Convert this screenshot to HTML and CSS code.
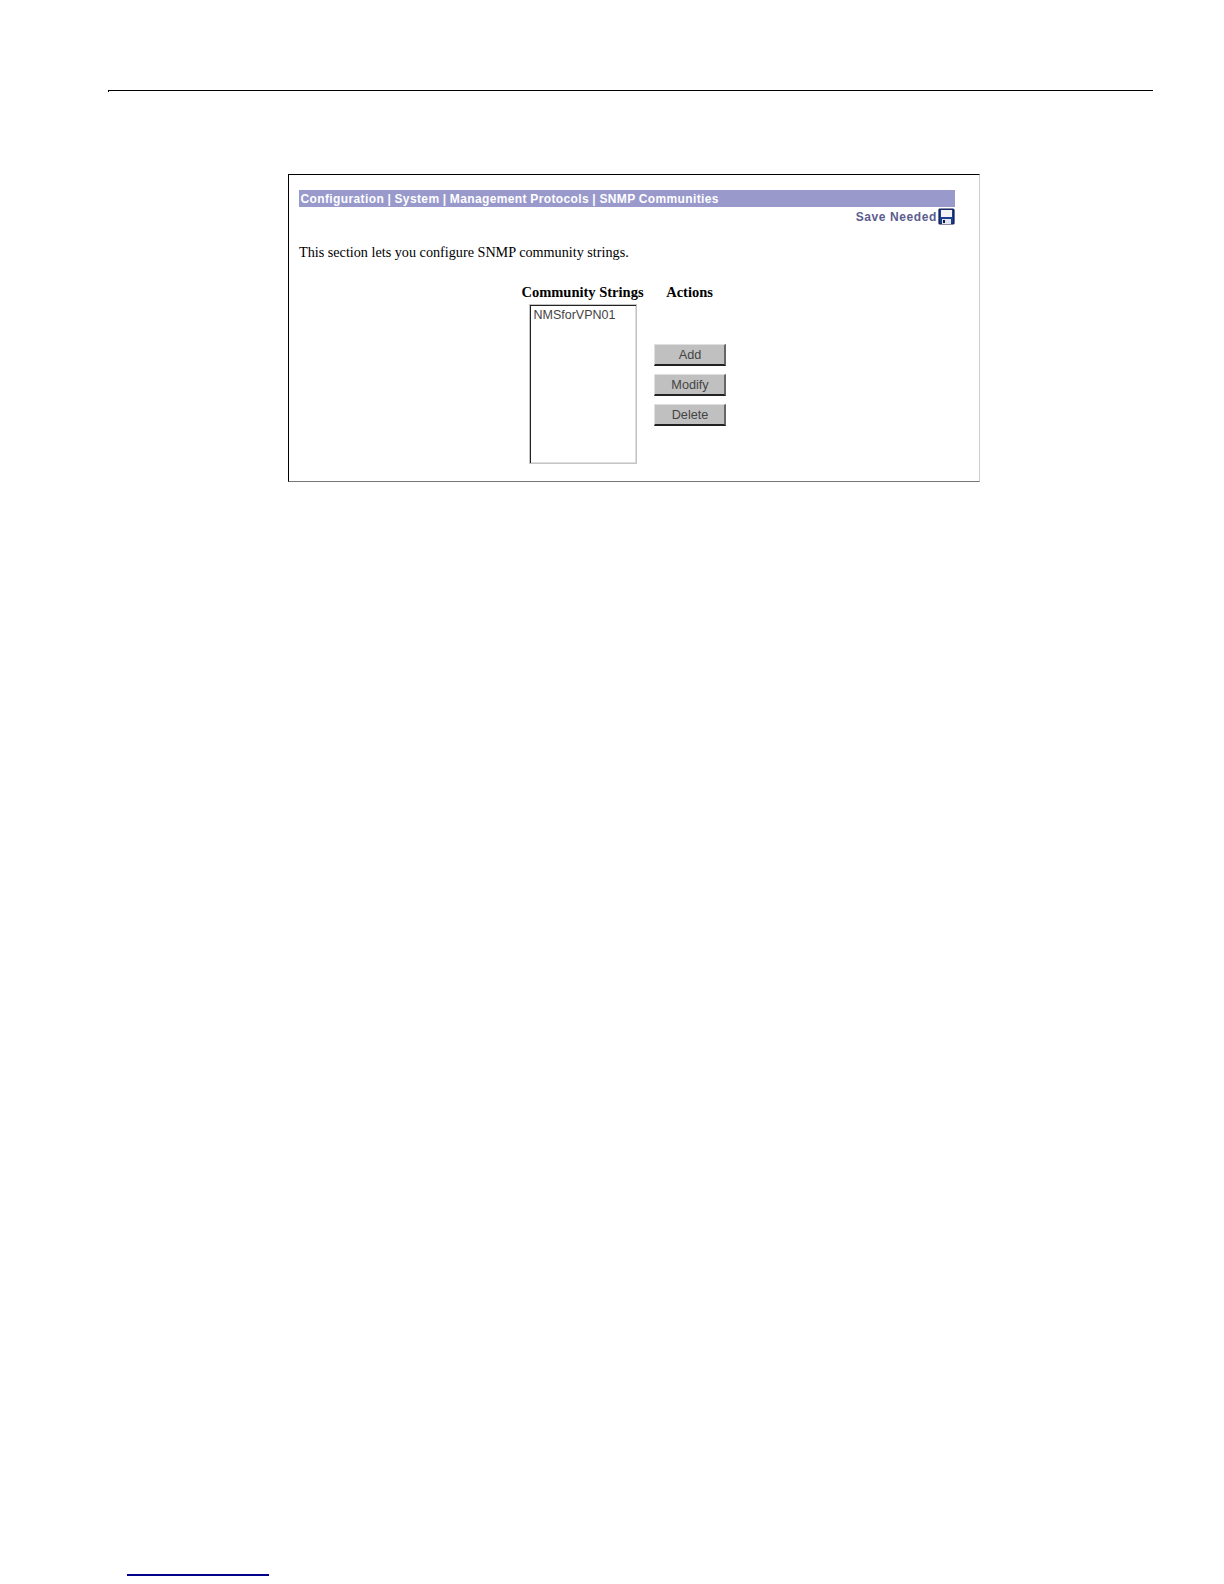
FILE: index.html
```html
<!DOCTYPE html>
<html lang="en">
<head>
    <meta charset="UTF-8">
    <title>SNMP Communities</title>
    <link rel="stylesheet" href="styles.css">
</head>
<body>
    <div class="page-rule"></div>

    <div class="panel">
        <div class="title-bar">Configuration | System | Management Protocols | SNMP Communities</div>
        <div class="save-row">
            <span class="save-text">Save Needed</span>
            <svg class="save-icon" width="17" height="17" viewBox="0 0 17 17">
                <path d="M1 2 Q1 1 2 1 H15 Q16 1 16 2 V15 Q16 16 15 16 H2 Q1 16 1 15 Z" fill="#1c3f94" stroke="#10184a" stroke-width="1.2"/>
                <rect x="3" y="2" width="11" height="7" fill="#f4f4f8"/>
                <rect x="4" y="11" width="9" height="5" fill="#e4e6ee"/>
                <rect x="5" y="12" width="2" height="3" fill="#10184a"/>
            </svg>
        </div>
        <p class="intro">This section lets you configure SNMP community strings.</p>

        <div class="form-area">
            <div class="list-col">
                <div class="col-head">Community Strings</div>
                <select class="string-list" size="10">
                    <option>NMSforVPN01</option>
                </select>
            </div>
            <div class="action-col">
                <div class="col-head">Actions</div>
                <div class="buttons">
                    <button>Add</button>
                    <button>Modify</button>
                    <button>Delete</button>
                </div>
            </div>
        </div>
    </div>

    <div class="footnote-rule"></div>
</body>
</html>
```

FILE: styles.css
```css
html, body {
    margin: 0;
    padding: 0;
    background: #fff;
}
body {
    height: 1584px;
    overflow: hidden;
    font-family: "Liberation Serif", serif;
    color: #000;
}
.page-rule {
    position: relative;
    height: 1px;
    margin: 90px 71px 0 108px;
    background: #000;
}
.page-rule::before {
    content: "";
    position: absolute;
    left: 0;
    top: 1px;
    width: 1px;
    height: 1px;
    background: #000;
}
.panel {
    box-sizing: border-box;
    width: 692px;
    height: 308px;
    margin: 83px 0 0 288px;
    padding: 15px 24px 0 10px;
    border-top: 1px solid #000;
    border-left: 1px solid #000;
    border-right: 1px solid #ccc;
    border-bottom: 1px solid #777;
}
.title-bar {
    height: 17px;
    padding-left: 1.5px;
    background: #9999cc;
    color: #fff;
    font: bold 12px/18px "Liberation Sans", sans-serif;
    letter-spacing: 0.38px;
    word-spacing: -0.4px;
    white-space: nowrap;
}
.save-row {
    display: flex;
    justify-content: flex-end;
    align-items: center;
    height: 17px;
    margin-top: 1px;
    gap: 1px;
}
.save-text {
    color: #5c5c8e;
    font: bold 12px/16px "Liberation Sans", sans-serif;
    letter-spacing: 0.6px;
}
.intro {
    margin: 19px 0 0;
    font-size: 14.2px;
    line-height: 16px;
}
.form-area {
    display: flex;
    justify-content: center;
    gap: 10px;
    margin: 24px 0 0 -7px;
}
.list-col {
    display: flex;
    flex-direction: column;
    align-items: center;
}
.action-col {
    display: flex;
    flex-direction: column;
    align-items: center;
}
.col-head {
    font-size: 14.5px;
    font-weight: bold;
    line-height: 16px;
    white-space: nowrap;
}
.string-list {
    box-sizing: border-box;
    width: 108px;
    height: 160px;
    margin-top: 4px;
    padding: 2px;
    border: 1px solid #c4c4c4;
    border-radius: 0;
    box-shadow: inset 1px 1px 0 #222, inset -1px -1px 0 #ddd;
    background: #fff;
    font: 12.5px "Liberation Sans", sans-serif;
    color: #444;
    overflow: hidden;
}
.string-list option {
    padding: 1px 2px;
}
.buttons {
    display: flex;
    flex-direction: column;
    gap: 8px;
    margin-top: 44px;
}
button {
    box-sizing: border-box;
    width: 72px;
    height: 22px;
    padding: 0 0 0 2px;
    background: #c0c0c0;
    border-style: solid;
    border-width: 1px 2px 2px 1px;
    border-color: #e0e0e0 #666 #222 #e0e0e0;
    border-radius: 0;
    font: 12.7px "Liberation Sans", sans-serif;
    color: #444;
}
.footnote-rule {
    width: 142px;
    height: 2px;
    margin: 1092px 0 0 127px;
    background: #00008b;
}
```
